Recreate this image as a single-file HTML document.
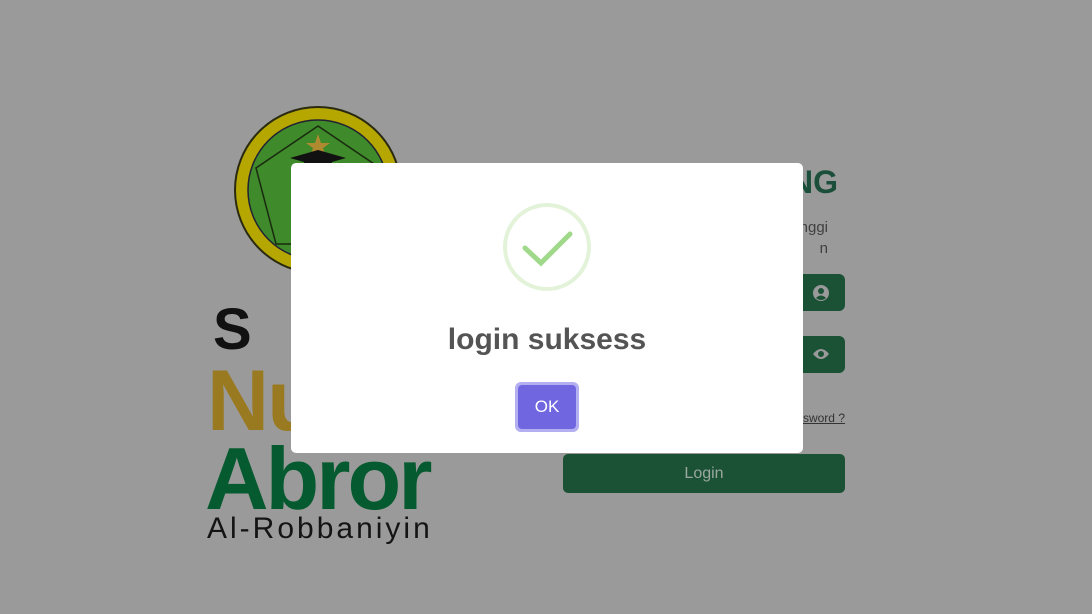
<!DOCTYPE html>
<html><head><meta charset="utf-8"><style>
*{margin:0;padding:0;box-sizing:border-box}
body{width:1092px;height:614px;background:#9a9a9a;position:relative;overflow:hidden;font-family:"Liberation Sans",sans-serif}
.a{position:absolute}
</style></head><body>
<svg class="a" style="left:230px;top:104px" width="176" height="172" viewBox="0 0 176 172">
<circle cx="88" cy="86" r="83" fill="#b5a600" stroke="#2a2a10" stroke-width="2"/>
<circle cx="88" cy="86" r="70" fill="#3f8a2a" stroke="#223" stroke-width="1.5"/>
<polygon points="88,22 150,64 130,140 46,140 26,64" fill="none" stroke="#1a2a10" stroke-width="1.5"/>
<polygon points="88,30 91,39 100,39 93,44 96,53 88,47 80,53 83,44 76,39 85,39" fill="#b08a30"/>
<path d="M60 54 L88 46 L116 54 L88 62 Z" fill="#111"/>
<rect x="74" y="56" width="28" height="10" fill="#111"/>
</svg>
<div class="a" style="left:213px;top:296px;font-size:58px;font-weight:bold;color:#111;letter-spacing:18px">S T</div>
<div class="a" style="left:207px;top:352px;font-size:86px;font-weight:bold;color:#9a7a20;letter-spacing:-2px">Nu</div>
<div class="a" style="left:205px;top:428px;font-size:88px;font-weight:bold;color:#065a30;letter-spacing:-3px">Abror</div>
<div class="a" style="left:207px;top:512px;font-size:30px;color:#141414;letter-spacing:3px">Al-Robbaniyin</div>
<div class="a" style="left:790px;top:164px;font-size:32px;font-weight:bold;color:#1b4f3c">NG</div>
<div class="a" style="left:760px;top:217px;font-size:15px;color:#404040;line-height:21px;text-align:right;width:68px">nggi<br>n</div>
<div class="a" style="left:780px;top:274px;width:65px;height:37px;background:#1b5236;border-radius:6px"></div>
<svg class="a" style="left:813px;top:285px" width="16" height="16" viewBox="0 0 16 16"><circle cx="8" cy="8" r="8" fill="#9a9a9a"/><circle cx="8" cy="6" r="3" fill="#1b5236"/><path d="M3 13 Q8 8 13 13 Q8 17 3 13Z" fill="#1b5236"/></svg>
<div class="a" style="left:780px;top:336px;width:65px;height:37px;background:#1b5236;border-radius:6px"></div>
<svg class="a" style="left:812px;top:347px" width="18" height="14" viewBox="0 0 18 14"><path d="M1 7 Q9 -3 17 7 Q9 17 1 7Z" fill="#9a9a9a"/><circle cx="9" cy="7" r="3" fill="#1b5236"/></svg>
<div class="a" style="left:760px;top:411px;width:85px;text-align:right;font-size:12px;color:#333;text-decoration:underline">sword ?</div>
<div class="a" style="left:563px;top:454px;width:282px;height:39px;background:#1b5236;border-radius:5px;color:#9aa89e;font-size:16px;text-align:center;line-height:39px">Login</div>
<div class="a" style="left:291px;top:163px;width:512px;height:290px;background:#fff;border-radius:5px"></div>
<svg class="a" style="left:500px;top:200px" width="94" height="94" viewBox="0 0 94 94"><circle cx="47" cy="47" r="42" fill="none" stroke="#e3f3d9" stroke-width="4"/><path d="M25 48 L41 63 L70 34" fill="none" stroke="#a1d98a" stroke-width="5" stroke-linecap="round"/></svg>
<div class="a" style="left:291px;top:323px;width:512px;text-align:center;font-size:30px;font-weight:bold;color:#545454">login suksess</div>
<div class="a" style="left:515px;top:382px;width:64px;height:50px;border-radius:6px;background:#b4aff0"></div>
<div class="a" style="left:518px;top:385px;width:58px;height:44px;border-radius:4px;background:#7066e0;color:#fff;font-size:17px;text-align:center;line-height:44px">OK</div>
</body></html>
